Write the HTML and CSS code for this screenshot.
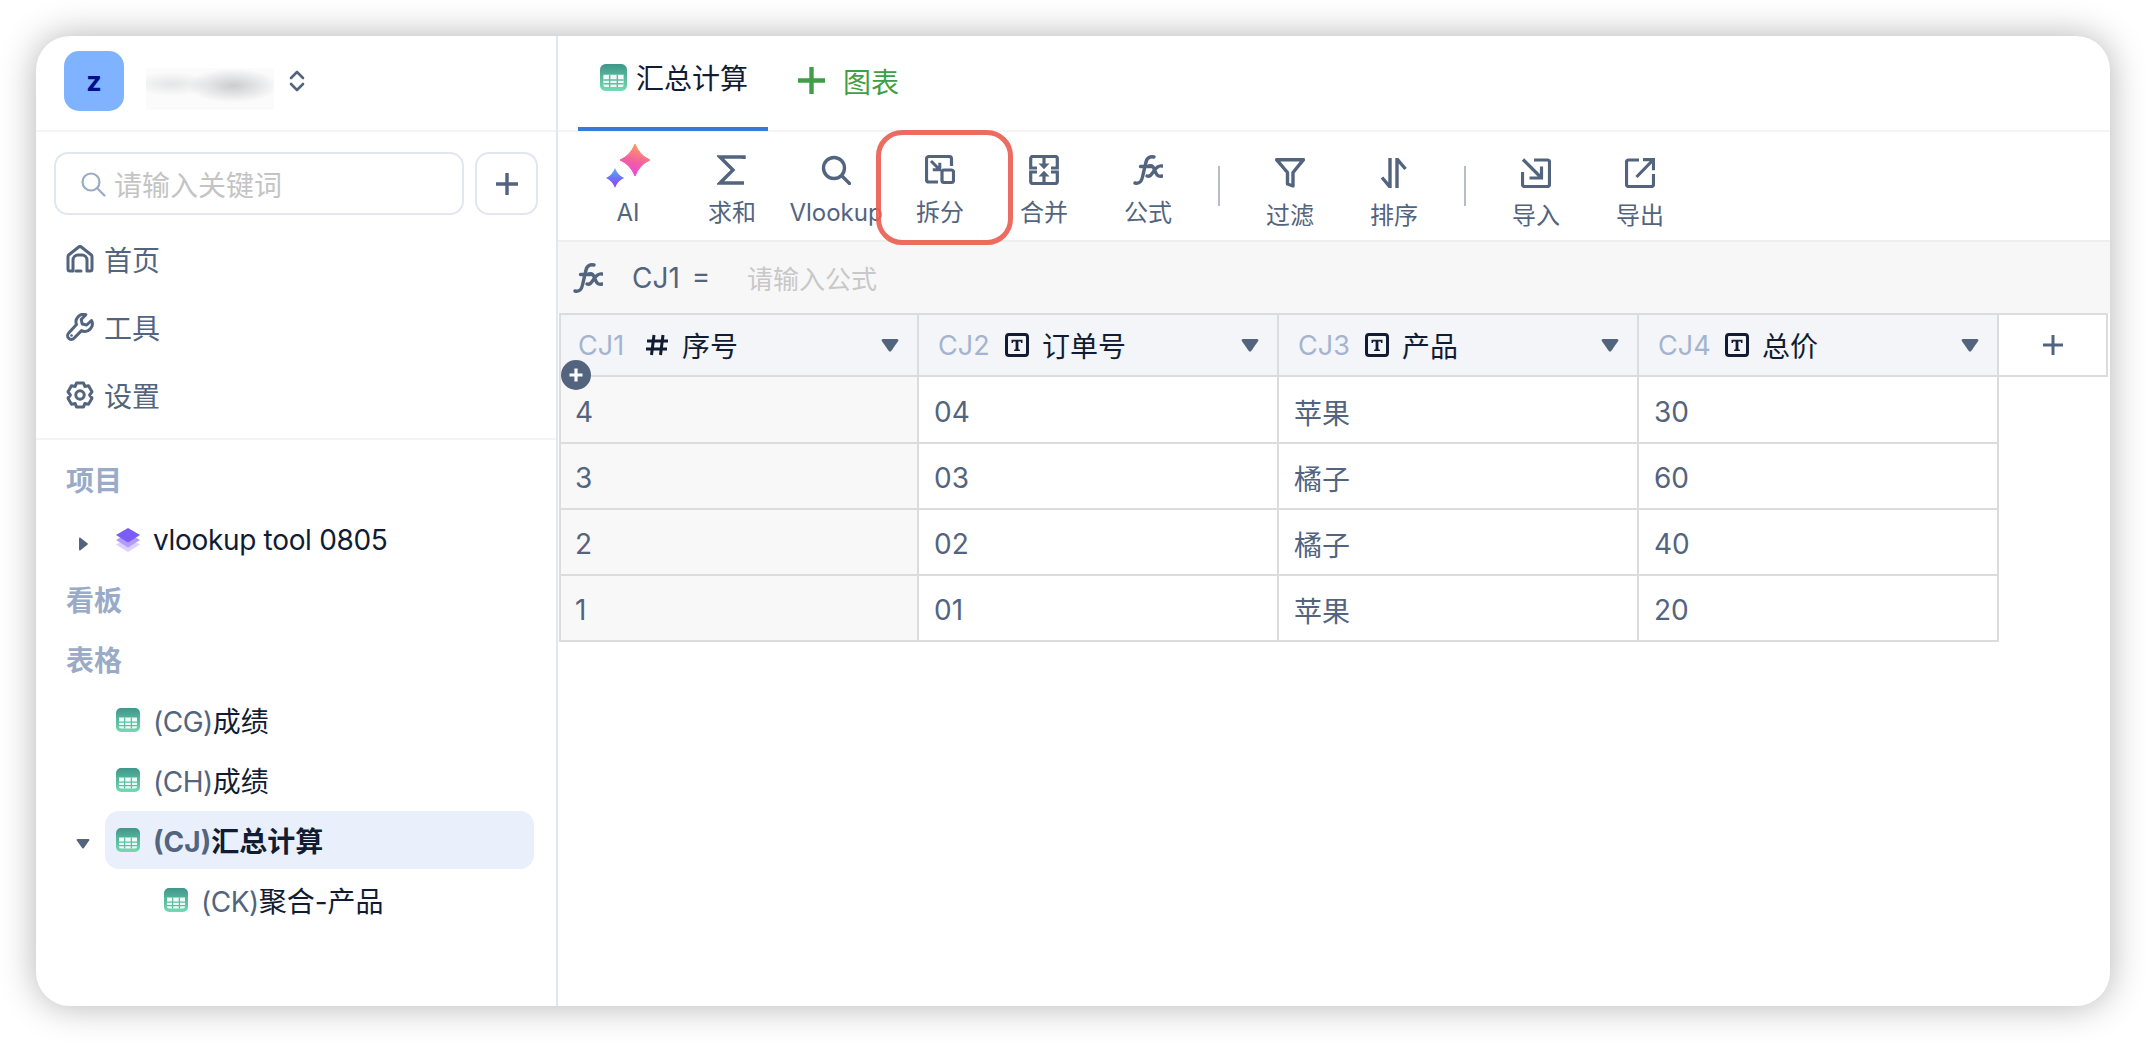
FILE: index.html
```html
<!DOCTYPE html>
<html lang="zh-CN">
<head>
<meta charset="utf-8">
<title>汇总计算</title>
<link rel="stylesheet" href="styles.css">
</head>
<body>
<svg class="defs" width="0" height="0" aria-hidden="true">
  <defs>
    <linearGradient id="sheetGrad" x1="0" y1="0" x2="0" y2="1"><stop offset="0" stop-color="#3f9689"/><stop offset="1" stop-color="#72dcb2"/></linearGradient>
    <linearGradient id="starA" x1="0.7" y1="0" x2="0.4" y2="1"><stop offset="0" stop-color="#fba35a"/><stop offset="0.55" stop-color="#f4609f"/><stop offset="1" stop-color="#e946d8"/></linearGradient>
    <linearGradient id="starB" x1="0.5" y1="0" x2="0.5" y2="1"><stop offset="0" stop-color="#58b2fb"/><stop offset="0.55" stop-color="#6e6ef8"/><stop offset="1" stop-color="#a13df0"/></linearGradient>
    <symbol id="sheet" viewBox="0 0 24 24">
      <rect width="24" height="24" rx="5" fill="url(#sheetGrad)"/>
      <path d="M3 9.500h18v9a2 2 0 0 1-2 2H5a2 2 0 0 1-2-2z" fill="#fff" opacity=".92"/>
      <path d="M3 14.200h18M3 17.600h18M8.600 9.500v11M15.400 9.500v11" stroke="#5cbfa3" stroke-width="1.300" fill="none"/>
    </symbol>
    <symbol id="type-t" viewBox="0 0 24 24">
      <rect x="1.500" y="1.500" width="21" height="21" rx="2.500" fill="none" stroke="#111c33" stroke-width="3"/>
      <path d="M6.500 10V6.800h11V10h-1.400l-.5-1.500h-2.200v7.800l1.500.5V18H9.100v-1.200l1.500-.5V8.500H8.400L7.900 10z" fill="#111c33"/>
    </symbol>
    <symbol id="caret" viewBox="0 0 18 14">
      <path d="M2 1h14c1.200 0 1.800 1 1.200 2l-7 10c-.6.8-1.800.8-2.400 0l-7-10C.2 2 .8 1 2 1z" fill="#53647e"/>
    </symbol>
  </defs>
</svg>

<div class="window">
  <aside class="sidebar">
    <div class="side-head">
      <div class="avatar">z</div>
      <div class="blurred"></div>
      <svg class="updown" viewBox="0 0 16 24" width="16" height="24"><path d="M2 9l6-6 6 6M2 15l6 6 6-6" fill="none" stroke="#53647e" stroke-width="2.600" stroke-linecap="round" stroke-linejoin="round"/></svg>
    </div>

    <div class="search-row">
      <div class="search">
        <svg viewBox="0 0 26 26" width="26" height="26"><circle cx="11" cy="11" r="8.500" fill="none" stroke="#9aabc8" stroke-width="2.200"/><path d="M17.500 17.500l7 7" stroke="#9aabc8" stroke-width="2.200" stroke-linecap="round"/></svg>
        <span>请输入关键词</span>
      </div>
      <div class="add-btn"><svg viewBox="0 0 24 24" width="24" height="24"><path d="M12 1v22M1 12h22" stroke="#53647e" stroke-width="3.400"/></svg></div>
    </div>

    <nav class="nav">
      <div class="nav-item">
        <svg viewBox="0 0 28 28" width="28" height="28"><path d="M2 24V11.500a2 2 0 0 1 .7-1.500l10-8a2 2 0 0 1 2.600 0l10 8a2 2 0 0 1 .7 1.500V24a2 2 0 0 1-2 2h-3V15a5 5 0 0 0-5-5h-4a5 5 0 0 0-5 5v11H4a2 2 0 0 1-2-2z" fill="none" stroke="#53647e" stroke-width="3" stroke-linejoin="round"/><path d="M10 26h5" stroke="#53647e" stroke-width="3" stroke-linecap="round"/></svg>
        <span>首页</span>
      </div>
      <div class="nav-item">
        <svg viewBox="0 0 28 28" width="28" height="28"><path d="M25.500 7.500l-4.800 4.500-4.500-1-1-4.500 4.600-4.800a7.500 7.500 0 0 0-9.300 9.800L2.700 20a3.700 3.700 0 0 0 5.300 5.300l7.500-7.700a7.500 7.500 0 0 0 10-10.100z" fill="none" stroke="#53647e" stroke-width="3" stroke-linejoin="round"/><circle cx="5.500" cy="22.500" r="1.300" fill="#53647e"/></svg>
        <span>工具</span>
      </div>
      <div class="nav-item">
        <svg viewBox="0 0 28 28" width="28" height="28"><path d="M10.500 2h7l1.300 3.400 3.700-.6 3.500 6L23.600 14l2.400 3.200-3.500 6-3.700-.6L17.500 26h-7l-1.300-3.400-3.700.6-3.500-6L4.400 14 2 10.800l3.500-6 3.700.6z" fill="none" stroke="#53647e" stroke-width="3" stroke-linejoin="round"/><circle cx="14" cy="14" r="4.200" fill="none" stroke="#53647e" stroke-width="3"/></svg>
        <span>设置</span>
      </div>
    </nav>

    <div class="tree">
      <div class="section">项目</div>
      <div class="tree-row">
        <span class="slot"><svg class="arrow" viewBox="0 0 10 14" width="10" height="14"><path d="M1 1.500v11c0 .8.800 1.200 1.400.7l7-5.500c.5-.4.500-1 0-1.400l-7-5.500C1.800.3 1 .7 1 1.500z" fill="#53647e"/></svg></span>
        <div class="pill">
          <svg viewBox="0 0 24 24" width="24" height="24"><path d="M12 10L24 16.500 12 24 0 16.500z" fill="#dccffd"/><path d="M12 5L24 12 12 19.500 0 12z" fill="#b29cfa"/><path d="M12 0L24 7 12 14.500 0 7z" fill="#7b5cf6"/></svg>
          <span class="dark project">vlookup tool 0805</span>
        </div>
      </div>
      <div class="section">看板</div>
      <div class="section">表格</div>
      <div class="tree-row">
        <span class="slot"></span>
        <div class="pill"><svg width="24" height="24"><use href="#sheet"/></svg><span><span class="code">(CG)</span><span class="dark">成绩</span></span></div>
      </div>
      <div class="tree-row">
        <span class="slot"></span>
        <div class="pill"><svg width="24" height="24"><use href="#sheet"/></svg><span><span class="code">(CH)</span><span class="dark">成绩</span></span></div>
      </div>
      <div class="tree-row">
        <span class="slot"><svg class="arrow" viewBox="0 0 14 10" width="14" height="10"><path d="M1.500 0h11c.8 0 1.200.8.700 1.400l-5.500 7.800c-.4.500-1 .5-1.400 0L.8 1.400C.3.800.7 0 1.500 0z" fill="#53647e"/></svg></span>
        <div class="pill active"><svg width="24" height="24"><use href="#sheet"/></svg><span><span class="code">(CJ)</span><span class="dark">汇总计算</span></span></div>
      </div>
      <div class="tree-row">
        <span class="slot"></span>
        <div class="pill child"><svg width="24" height="24"><use href="#sheet"/></svg><span><span class="code">(CK)</span><span class="dark">聚合-产品</span></span></div>
      </div>
    </div>
  </aside>

  <main class="main">
    <div class="tabs">
      <div class="tab"><svg width="27" height="27"><use href="#sheet"/></svg><span>汇总计算</span></div>
      <div class="tab-add"><svg viewBox="0 0 27 27" width="27" height="27"><path d="M13.500 0v27M0 13.500h27" stroke="#3f9e47" stroke-width="4.400"/></svg><span>图表</span></div>
    </div>

    <div class="toolbar">
      <div class="tool">
        <svg class="ico-ai" viewBox="0 0 44 44" width="44" height="44"><path d="M29 0Q33.500 11.500 44 16 33.500 20.500 29 32 24.500 20.500 14 16 24.500 11.500 29 0z" fill="url(#starA)" stroke="url(#starA)" stroke-width="1" stroke-linejoin="round"/><path d="M9 24Q11.700 31.300 18 34 11.700 36.700 9 44 6.300 36.700 0 34 6.300 31.300 9 24z" fill="url(#starB)"/></svg>
        <span class="label">AI</span>
      </div>
      <div class="tool">
        <svg class="ico" viewBox="0 0 30 30"><path d="M27 4V2H3l13 13L3 28h24" fill="none" stroke="#53647e" stroke-width="3.400" stroke-linejoin="miter"/></svg>
        <span class="label">求和</span>
      </div>
      <div class="tool">
        <svg class="ico" viewBox="0 0 30 30"><circle cx="13" cy="13" r="10.500" fill="none" stroke="#53647e" stroke-width="3.400"/><path d="M21 21l7.500 7.500" stroke="#53647e" stroke-width="3.400" stroke-linecap="round"/></svg>
        <span class="label">Vlookup</span>
      </div>
      <div class="tool">
        <svg class="ico" viewBox="0 0 30 30"><path d="M13 27H4a2.500 2.500 0 0 1-2.500-2.500V4A2.500 2.500 0 0 1 4 1.500h20A2.500 2.500 0 0 1 26.500 4v7" fill="none" stroke="#53647e" stroke-width="3.200"/><rect x="17" y="15" width="11.500" height="12.500" rx="2" fill="none" stroke="#53647e" stroke-width="3.200"/><path d="M6 6l8.500 8.500M14.800 7.800v7H7.800" fill="none" stroke="#53647e" stroke-width="3"/></svg>
        <span class="label">拆分</span>
      </div>
      <div class="tool">
        <svg class="ico" viewBox="0 0 30 30"><path d="M8 13H1.700V3.500a2 2 0 0 1 2-2h22.600a2 2 0 0 1 2 2V13H22M8 17H1.700v9.500a2 2 0 0 0 2 2h22.600a2 2 0 0 0 2-2V17H22" fill="none" stroke="#53647e" stroke-width="3.200"/><path d="M15 2v8M15 28v-8" stroke="#53647e" stroke-width="3.200"/><path d="M9.500 8.500h11L15 14.200zM9.500 21.500h11L15 15.800z" fill="#53647e"/></svg>
        <span class="label">合并</span>
      </div>
      <div class="tool">
        <svg class="ico" viewBox="0 0 30 30"><path d="M2 28c5 1 6.500-1.500 7.500-6L13 7c1-4 3.500-6 8-5M7.500 11.500h11" fill="none" stroke="#53647e" stroke-width="3.400" stroke-linecap="round"/><path d="M16 11c4-1 4.500 1.500 6 5s2.500 6 7 5M29 11c-4-1-6.500 2.500-8.500 5.500S17 22 14 21" fill="none" stroke="#53647e" stroke-width="3.400" stroke-linecap="round"/></svg>
        <span class="label">公式</span>
      </div>
      <div class="sep"></div>
      <div class="tool low">
        <svg class="ico" viewBox="0 0 30 30"><path d="M1.500 1.700h27L18 14.500V28l-5.500-2V14.500z" fill="none" stroke="#53647e" stroke-width="3.400" stroke-linejoin="round"/></svg>
        <span class="label">过滤</span>
      </div>
      <div class="tool low">
        <svg class="ico" viewBox="0 0 30 30"><path d="M11 0v29L3 19.500M18 30V1l8.500 10" fill="none" stroke="#53647e" stroke-width="3.400"/></svg>
        <span class="label">排序</span>
      </div>
      <div class="sep"></div>
      <div class="tool low">
        <svg class="ico" viewBox="0 0 30 30"><path d="M13 2h13.500a2 2 0 0 1 2 2v22.500a2 2 0 0 1-2 2H3.500a2 2 0 0 1-2-2V14" fill="none" stroke="#53647e" stroke-width="3.200"/><path d="M2 1.500L19.500 19M20.500 8.500v11.500H8.500" fill="none" stroke="#53647e" stroke-width="3.200"/></svg>
        <span class="label">导入</span>
      </div>
      <div class="tool low">
        <svg class="ico" viewBox="0 0 30 30"><path d="M14 2H3.500a2 2 0 0 0-2 2v22.500a2 2 0 0 0 2 2h23a2 2 0 0 0 2-2V16" fill="none" stroke="#53647e" stroke-width="3.200"/><path d="M11.500 19L28 2M18 1.700h10.500v10.500" fill="none" stroke="#53647e" stroke-width="3.200"/></svg>
        <span class="label">导出</span>
      </div>
      <div class="callout"></div>
    </div>

    <div class="formula">
      <svg class="ico" viewBox="0 0 30 30"><path d="M2 28c5 1 6.500-1.500 7.500-6L13 7c1-4 3.500-6 8-5M7.500 11.500h11" fill="none" stroke="#53647e" stroke-width="3.400" stroke-linecap="round"/><path d="M16 11c4-1 4.500 1.500 6 5s2.500 6 7 5M29 11c-4-1-6.500 2.500-8.500 5.500S17 22 14 21" fill="none" stroke="#53647e" stroke-width="3.400" stroke-linecap="round"/></svg>
      <span class="ref">CJ1 =</span>
      <span class="hint">请输入公式</span>
    </div>

    <div class="table">
      <div class="thead">
        <div class="th first"><span class="cid">CJ1</span>
          <svg class="ftype" viewBox="0 0 24 24"><path d="M9 2L6.500 22M18 2l-2.500 20M2 8h21M1 16h21" stroke="#111c33" stroke-width="3" fill="none"/></svg>
          <span class="tname">序号</span><svg class="tri"><use href="#caret"/></svg></div>
        <div class="th"><span class="cid">CJ2</span><svg class="ftype"><use href="#type-t"/></svg><span class="tname">订单号</span><svg class="tri"><use href="#caret"/></svg></div>
        <div class="th"><span class="cid">CJ3</span><svg class="ftype"><use href="#type-t"/></svg><span class="tname">产品</span><svg class="tri"><use href="#caret"/></svg></div>
        <div class="th"><span class="cid">CJ4</span><svg class="ftype"><use href="#type-t"/></svg><span class="tname">总价</span><svg class="tri"><use href="#caret"/></svg></div>
        <div class="th add"><svg viewBox="0 0 20 20" width="20" height="20"><path d="M10 0v20M0 10h20" stroke="#53647e" stroke-width="3"/></svg></div>
      </div>
      <div class="row"><div class="td first">4</div><div class="td">04</div><div class="td">苹果</div><div class="td">30</div></div>
      <div class="row"><div class="td first">3</div><div class="td">03</div><div class="td">橘子</div><div class="td">60</div></div>
      <div class="row"><div class="td first">2</div><div class="td">02</div><div class="td">橘子</div><div class="td">40</div></div>
      <div class="row"><div class="td first">1</div><div class="td">01</div><div class="td">苹果</div><div class="td">20</div></div>
      <div class="row-add"><svg viewBox="0 0 30 30" width="30" height="30"><circle cx="15" cy="15" r="15" fill="#53647e"/><path d="M15 8.500v13M8.500 15h13" stroke="#fff" stroke-width="3.200"/></svg></div>
    </div>
  </main>
</div>
</body>
</html>
```

FILE: styles.css
```css
* { box-sizing: border-box; }
html, body { margin: 0; padding: 0; background: #fff; }
body {
  width: 2146px;
  height: 1042px;
  padding: 36px;
  overflow: hidden;
  font-family: Inter, "Noto Sans CJK SC", sans-serif;
  font-size: 28px;
  color: #53647e;
}
svg { display: block; flex: none; }
.defs { position: absolute; }

.window {
  display: flex;
  width: 2074px;
  height: 970px;
  background: #fff;
  border-radius: 34px;
  box-shadow: 0 0 36px rgba(0, 0, 0, .3);
  overflow: hidden;
}

/* sidebar */
.sidebar {
  width: 522px;
  flex: none;
  border-right: 2px solid #e2e6f0;
}
.side-head {
  display: flex;
  align-items: center;
  height: 96px;
  padding: 0 0 4px 28px;
  border-bottom: 2px solid #f3f4f6;
}
.avatar {
  width: 60px;
  height: 60px;
  display: flex;
  align-items: center;
  justify-content: center;
  border-radius: 15px;
  background: #7fb3ff;
  color: #00108c;
  font-weight: 700;
  font-size: 27px;
}
.blurred {
  width: 128px;
  height: 42px;
  margin: 16px 0 0 22px;
  background:
    radial-gradient(ellipse 46px 17px at 68% 42%, #cbcccf 0%, rgba(203, 204, 207, 0) 100%),
    radial-gradient(ellipse 40px 12px at 20% 38%, #e4e5e6 0%, rgba(228, 229, 230, 0) 100%),
    #fbfbfb;
}
.updown { margin: 0 0 0 15px; }

.search-row {
  display: flex;
  gap: 11px;
  margin: 20px 0 0 18px;
}
.search {
  display: flex;
  align-items: center;
  gap: 8px;
  width: 410px;
  height: 63px;
  padding-left: 24px;
  border: 2px solid #e2e6f0;
  border-radius: 14px;
  color: #c4c4c4;
}
.add-btn {
  display: flex;
  align-items: center;
  justify-content: center;
  width: 63px;
  height: 63px;
  border: 2px solid #e2e6f0;
  border-radius: 14px;
}

.nav {
  padding: 10px 0 9px;
  border-bottom: 2px solid #f3f4f6;
}
.nav-item {
  display: flex;
  align-items: center;
  gap: 10px;
  height: 68px;
  padding-left: 30px;
}

.tree { padding-top: 10px; }
.section {
  height: 60px;
  line-height: 62px;
  padding-left: 30px;
  color: #9aabc8;
  font-weight: 700;
}
.tree-row {
  display: flex;
  align-items: center;
  height: 60px;
}
.slot {
  display: flex;
  justify-content: center;
  width: 69px;
  padding-left: 34px;
  padding-right: 9px;
}
.arrow { margin-top: 8px; }
.pill {
  display: flex;
  align-items: center;
  gap: 13px;
  width: 429px;
  height: 58px;
  padding-left: 11px;
  border-radius: 14px;
}
.pill.child { padding-left: 59px; }
.pill.active { background: #e9f0fb; font-weight: 700; }
.dark { color: #111c33; }
.project { letter-spacing: -.32px; }
.code { letter-spacing: -.5px; }
.active .code { letter-spacing: 0; }

/* main */
.main {
  flex: 1;
  min-width: 0;
}
.tabs {
  display: flex;
  height: 96px;
  border-bottom: 2px solid #f3f4f6;
}
.tab {
  display: flex;
  align-items: center;
  gap: 9px;
  width: 190px;
  height: 95px;
  margin-left: 20px;
  padding: 0 0 9px 22px;
  border-bottom: 4px solid #3b78dd;
  color: #111c33;
}
.tab-add {
  display: flex;
  align-items: center;
  gap: 18px;
  height: 89px;
  margin-left: 30px;
  color: #3f9e47;
}

.toolbar {
  position: relative;
  display: flex;
  height: 110px;
  padding-left: 18px;
  border-bottom: 2px solid #eeeeee;
}
.tool {
  display: flex;
  flex-direction: column;
  align-items: center;
  width: 104px;
  padding-top: 23px;
}
.tool.low { padding-top: 26px; }
.ico { width: 30px; height: 30px; }
.ico-ai { margin: -11px 0 -3px; }
.label {
  margin-top: 11px;
  line-height: 34px;
  font-size: 24px;
  white-space: nowrap;
}
.sep {
  width: 2px;
  height: 40px;
  margin: 34px 18px 0;
  background: #b9bdc5;
}
.callout {
  position: absolute;
  left: 318px;
  top: -2px;
  width: 137px;
  height: 115px;
  border: 5px solid rgba(236, 96, 84, .92);
  border-radius: 26px;
}

.formula {
  display: flex;
  align-items: center;
  height: 71px;
  padding-left: 15px;
  background: #f7f7f8;
}
.ref {
  width: 76px;
  margin-left: 29px;
  word-spacing: 4px;
  white-space: nowrap;
}
.hint {
  margin-left: 39px;
  font-size: 26px;
  color: #c8c8c8;
}

.table { position: relative; }
.thead {
  display: flex;
  width: 1549px;
  height: 64px;
  margin-left: 1px;
  border-top: 2px solid #dcdcdc;
  border-bottom: 2px solid #dcdcdc;
}
.th {
  display: flex;
  align-items: center;
  width: 360px;
  padding: 0 18px 0 19px;
  background: #f3f5f8;
  border-right: 2px solid #dcdcdc;
}
.th.first, .td.first { border-left: 2px solid #dcdcdc; }
.th.first { padding-left: 17px; }
.th.add {
  width: 109px;
  padding: 0;
  justify-content: center;
  background: #fff;
}
.cid {
  width: 49px;
  margin-right: 18px;
  font-size: 27px;
  color: #a4b4cf;
}
.ftype { width: 24px; height: 24px; margin-right: 13px; }
.tname { color: #111c33; }
.tri { width: 18px; height: 14px; margin-left: auto; }

.row { display: flex; height: 66px; margin-left: 1px; }
.thead + .row { height: 67px; }
.td {
  display: flex;
  align-items: center;
  width: 360px;
  padding: 4px 0 0 15px;
  border-right: 2px solid #dcdcdc;
  border-bottom: 2px solid #dcdcdc;
}
.td.first { background: #f8f8f8; padding-left: 14px; }
.row-add {
  position: absolute;
  left: 3px;
  top: 47px;
}
```
